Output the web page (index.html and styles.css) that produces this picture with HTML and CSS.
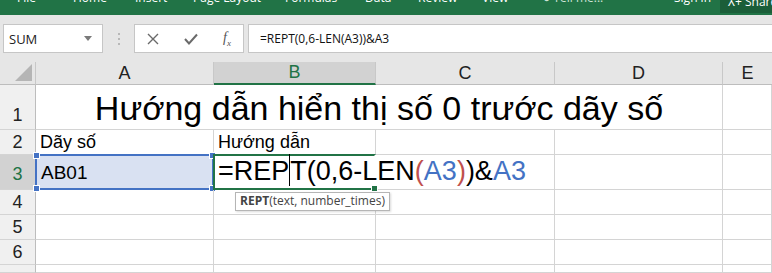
FILE: index.html
```html
<!DOCTYPE html>
<html lang="vi">
<head>
    <meta charset="UTF-8">
    <title>Hàm REPT</title>
    <link rel="stylesheet" href="styles.css">
</head>
<body>
    <div class="ribbon">
        <span class="tab t-file">File</span>
        <span class="tab t-home">Home</span>
        <span class="tab t-insert">Insert</span>
        <span class="tab t-layout">Page Layout</span>
        <span class="tab t-formulas">Formulas</span>
        <span class="tab t-data">Data</span>
        <span class="tab t-review">Review</span>
        <span class="tab t-view">View</span>
        <span class="tab t-tell">&#9679; Tell me...</span>
        <span class="tab t-sign">Sign in</span>
        <span class="share">&#8516;+ Share</span>
    </div>

    <div class="toolbar">
        <div class="namebox">
            <span>SUM</span>
            <svg width="8" height="5" viewBox="0 0 8 5"><path d="M0 0 H8 L4 5 Z" fill="#7a7a7a"/></svg>
        </div>
        <div class="dots">
            <i></i><i></i><i></i>
        </div>
        <div class="fbuttons">
            <svg width="12" height="12" viewBox="0 0 12 12"><path d="M1 1 L11 11 M11 1 L1 11" stroke="#6a6a6a" stroke-width="1.4"/></svg>
            <svg width="14" height="12" viewBox="0 0 14 12"><path d="M1 6 L5 10.5 L13 1.5" stroke="#6a6a6a" stroke-width="2" fill="none"/></svg>
            <span class="fx">f<sub>x</sub></span>
        </div>
        <div class="formula">=REPT(0,6-LEN(A3))&amp;A3</div>
    </div>

    <div class="sheet">
        <div class="corner"><span class="tri"></span></div>
        <div class="colhead">A</div>
        <div class="colhead active">B</div>
        <div class="colhead">C</div>
        <div class="colhead">D</div>
        <div class="colhead last">E</div>

        <div class="rowhead r1">1</div>
        <div class="cell title">Hướng dẫn hiển thị số 0 trước dãy số</div>
        <div class="cell"></div>

        <div class="rowhead">2</div>
        <div class="cell label">Dãy số</div>
        <div class="cell label">Hướng dẫn</div>
        <div class="cell"></div>
        <div class="cell"></div>
        <div class="cell"></div>

        <div class="rowhead r3 active">3</div>
        <div class="cell ref">
            AB01
            <i class="h tl"></i><i class="h tr"></i><i class="h bl"></i><i class="h br"></i>
        </div>
        <div class="cell editing">
            <span class="ftext">=REP<span class="caret"></span>T(0,6-LEN<span class="red">(</span><span class="blue">A3</span><span class="red">)</span>)&amp;<span class="blue">A3</span></span>
            <i class="gh"></i>
            <div class="tip"><b>REPT</b>(text, number_times)</div>
        </div>
        <div class="cell"></div>
        <div class="cell"></div>
        <div class="cell"></div>

        <div class="rowhead">4</div>
        <div class="cell"></div><div class="cell"></div><div class="cell"></div><div class="cell"></div><div class="cell"></div>
        <div class="rowhead">5</div>
        <div class="cell"></div><div class="cell"></div><div class="cell"></div><div class="cell"></div><div class="cell"></div>
        <div class="rowhead">6</div>
        <div class="cell"></div><div class="cell"></div><div class="cell"></div><div class="cell"></div><div class="cell"></div>
        <div class="rowhead r7">7</div>
        <div class="cell"></div><div class="cell"></div><div class="cell"></div><div class="cell"></div><div class="cell"></div>
    </div>
</body>
</html>
```

FILE: styles.css
```css
html, body {
    height: 273px;
    overflow: hidden;
}
body {
    margin: 0;
    width: 772px;
    background: #fff;
    font-family: "Liberation Sans", Arial, sans-serif;
}
.ribbon {
    position: relative;
    height: 15px;
    background: #217346;
    overflow: hidden;
    font-family: "Open Sans", sans-serif;
    font-size: 12px;
    color: #fff;
}
.tab {
    position: absolute;
    top: -11px;
}
.t-file { left: 17px; }
.t-home { left: 73px; }
.t-insert { left: 135px; }
.t-layout { left: 193px; }
.t-formulas { left: 285px; }
.t-data { left: 365px; }
.t-review { left: 418px; }
.t-view { left: 482px; }
.t-tell { left: 543px; color: #cfe3d6; }
.t-sign { left: 674px; }
.share {
    position: absolute;
    top: -9px;
    left: 720px;
    width: 60px;
    height: 22px;
    padding: 2px 0 0 8px;
    background: #1b5e39;
    box-sizing: border-box;
}
.toolbar {
    height: 47px;
    background: #e6e6e6;
    display: flex;
    align-items: flex-start;
    padding-top: 9px;
    box-sizing: border-box;
    font-family: "Open Sans", sans-serif;
}
.namebox, .fbuttons, .formula {
    height: 29px;
    background: #fff;
    border: 1px solid #c6c6c6;
    box-sizing: border-box;
    display: flex;
    align-items: center;
}
.namebox {
    margin-left: 3px;
    width: 100px;
    padding: 0 10px 0 5px;
    justify-content: space-between;
    font-size: 13px;
    color: #222;
}
.dots {
    width: 31px;
    height: 29px;
    display: flex;
    flex-direction: column;
    align-items: center;
    justify-content: center;
    gap: 3px;
}
.dots i {
    width: 2px;
    height: 2px;
    background: #b8b8b8;
}
.fbuttons {
    width: 110px;
    padding: 0 12px;
    justify-content: space-between;
}
.fx {
    font-family: "Liberation Serif", serif;
    font-style: italic;
    font-size: 14px;
    color: #555;
}
.fx sub {
    font-size: 9px;
}
.formula {
    flex: 1;
    margin-left: 4px;
    border-right: none;
    padding-left: 11px;
    font-size: 12px;
    color: #111;
}
.sheet {
    display: grid;
    grid-template-columns: 36px 178px 162px 179px 168px 49px;
    grid-template-rows: 23px 45px 25px 35px 25px 25px 25px 8px;
    position: relative;
}
.corner {
    background: #e6e6e6;
    border-right: 1px solid #c8c8c8;
    border-bottom: 1px solid #bdbdbd;
    display: flex;
    align-items: flex-end;
    justify-content: flex-end;
    padding: 0 3px 3px 0;
}
.tri {
    width: 0;
    height: 0;
    border-left: 17px solid transparent;
    border-bottom: 17px solid #b5b5b5;
}
.colhead {
    background: #e6e6e6;
    border-right: 1px solid #c8c8c8;
    border-bottom: 1px solid #bdbdbd;
    display: flex;
    align-items: center;
    justify-content: center;
    font-size: 18px;
    color: #222;
}
.colhead.active {
    background: #d2d2d2;
    color: #217346;
    border-bottom: 2px solid #217346;
}
.colhead.last {
    border-right: none;
}
.rowhead {
    background: #f0f0f0;
    border-right: 1px solid #bdbdbd;
    border-bottom: 1px solid #d4d4d4;
    display: flex;
    align-items: flex-end;
    justify-content: center;
    padding-bottom: 1px;
    font-size: 18px;
    color: #222;
    overflow: hidden;
}
.rowhead.r1 {
    padding-bottom: 3px;
}
.rowhead.r3 {
    padding-bottom: 4px;
}
.rowhead.r7 {
    align-items: flex-start;
    padding-top: 4px;
}
.rowhead.active {
    background: #d2d2d2;
    color: #217346;
}
.cell {
    border-right: 1px solid #d4d4d4;
    border-bottom: 1px solid #d4d4d4;
    display: flex;
    align-items: flex-end;
    padding: 0 4px 2px;
    font-size: 18px;
    color: #000;
    white-space: nowrap;
    position: relative;
    min-width: 0;
}
.title {
    grid-column: span 4;
    justify-content: center;
    align-items: center;
    font-size: 34px;
    padding: 2px 0 0;
}
.label {
    padding-bottom: 1px;
}
.ref {
    background: #d9e1f2;
    border: 2px solid #4472c4;
    margin: -1px 0 0 -1px;
    padding-bottom: 4px;
    font-size: 19px;
}
.h {
    position: absolute;
    width: 5px;
    height: 5px;
    background: #4472c4;
    border: 1px solid #fff;
}
.tl { left: -4px; top: -4px; }
.tr { right: -4px; top: -4px; }
.bl { left: -4px; bottom: -4px; }
.br { right: -4px; bottom: -4px; }
.editing {
    border: 2px solid #217346;
    border-right-color: transparent;
    margin: -1px 0 0 -1px;
    z-index: 2;
    overflow: visible;
    padding: 0 0 1px 3px;
    font-size: 27px;
}
.gh {
    position: absolute;
    right: -4px;
    bottom: -4px;
    width: 5px;
    height: 5px;
    background: #217346;
    border: 1px solid #fff;
}
.ftext {
    position: relative;
    z-index: 3;
}
.caret {
    display: inline-block;
    width: 0;
    height: 32px;
    border-left: 1px solid #000;
    vertical-align: -6px;
}
.red {
    color: #c0504d;
}
.blue {
    color: #4472c4;
}
.tip {
    position: absolute;
    left: 20px;
    top: 36px;
    height: 17px;
    padding: 0 4px;
    background: #fff;
    border: 1px solid #b5b5b5;
    box-shadow: 1px 1px 2px rgba(0, 0, 0, 0.15);
    font-family: "Open Sans", sans-serif;
    font-size: 12px;
    line-height: 16px;
    color: #444;
    z-index: 4;
}
.tip b {
    color: #444;
}
```
